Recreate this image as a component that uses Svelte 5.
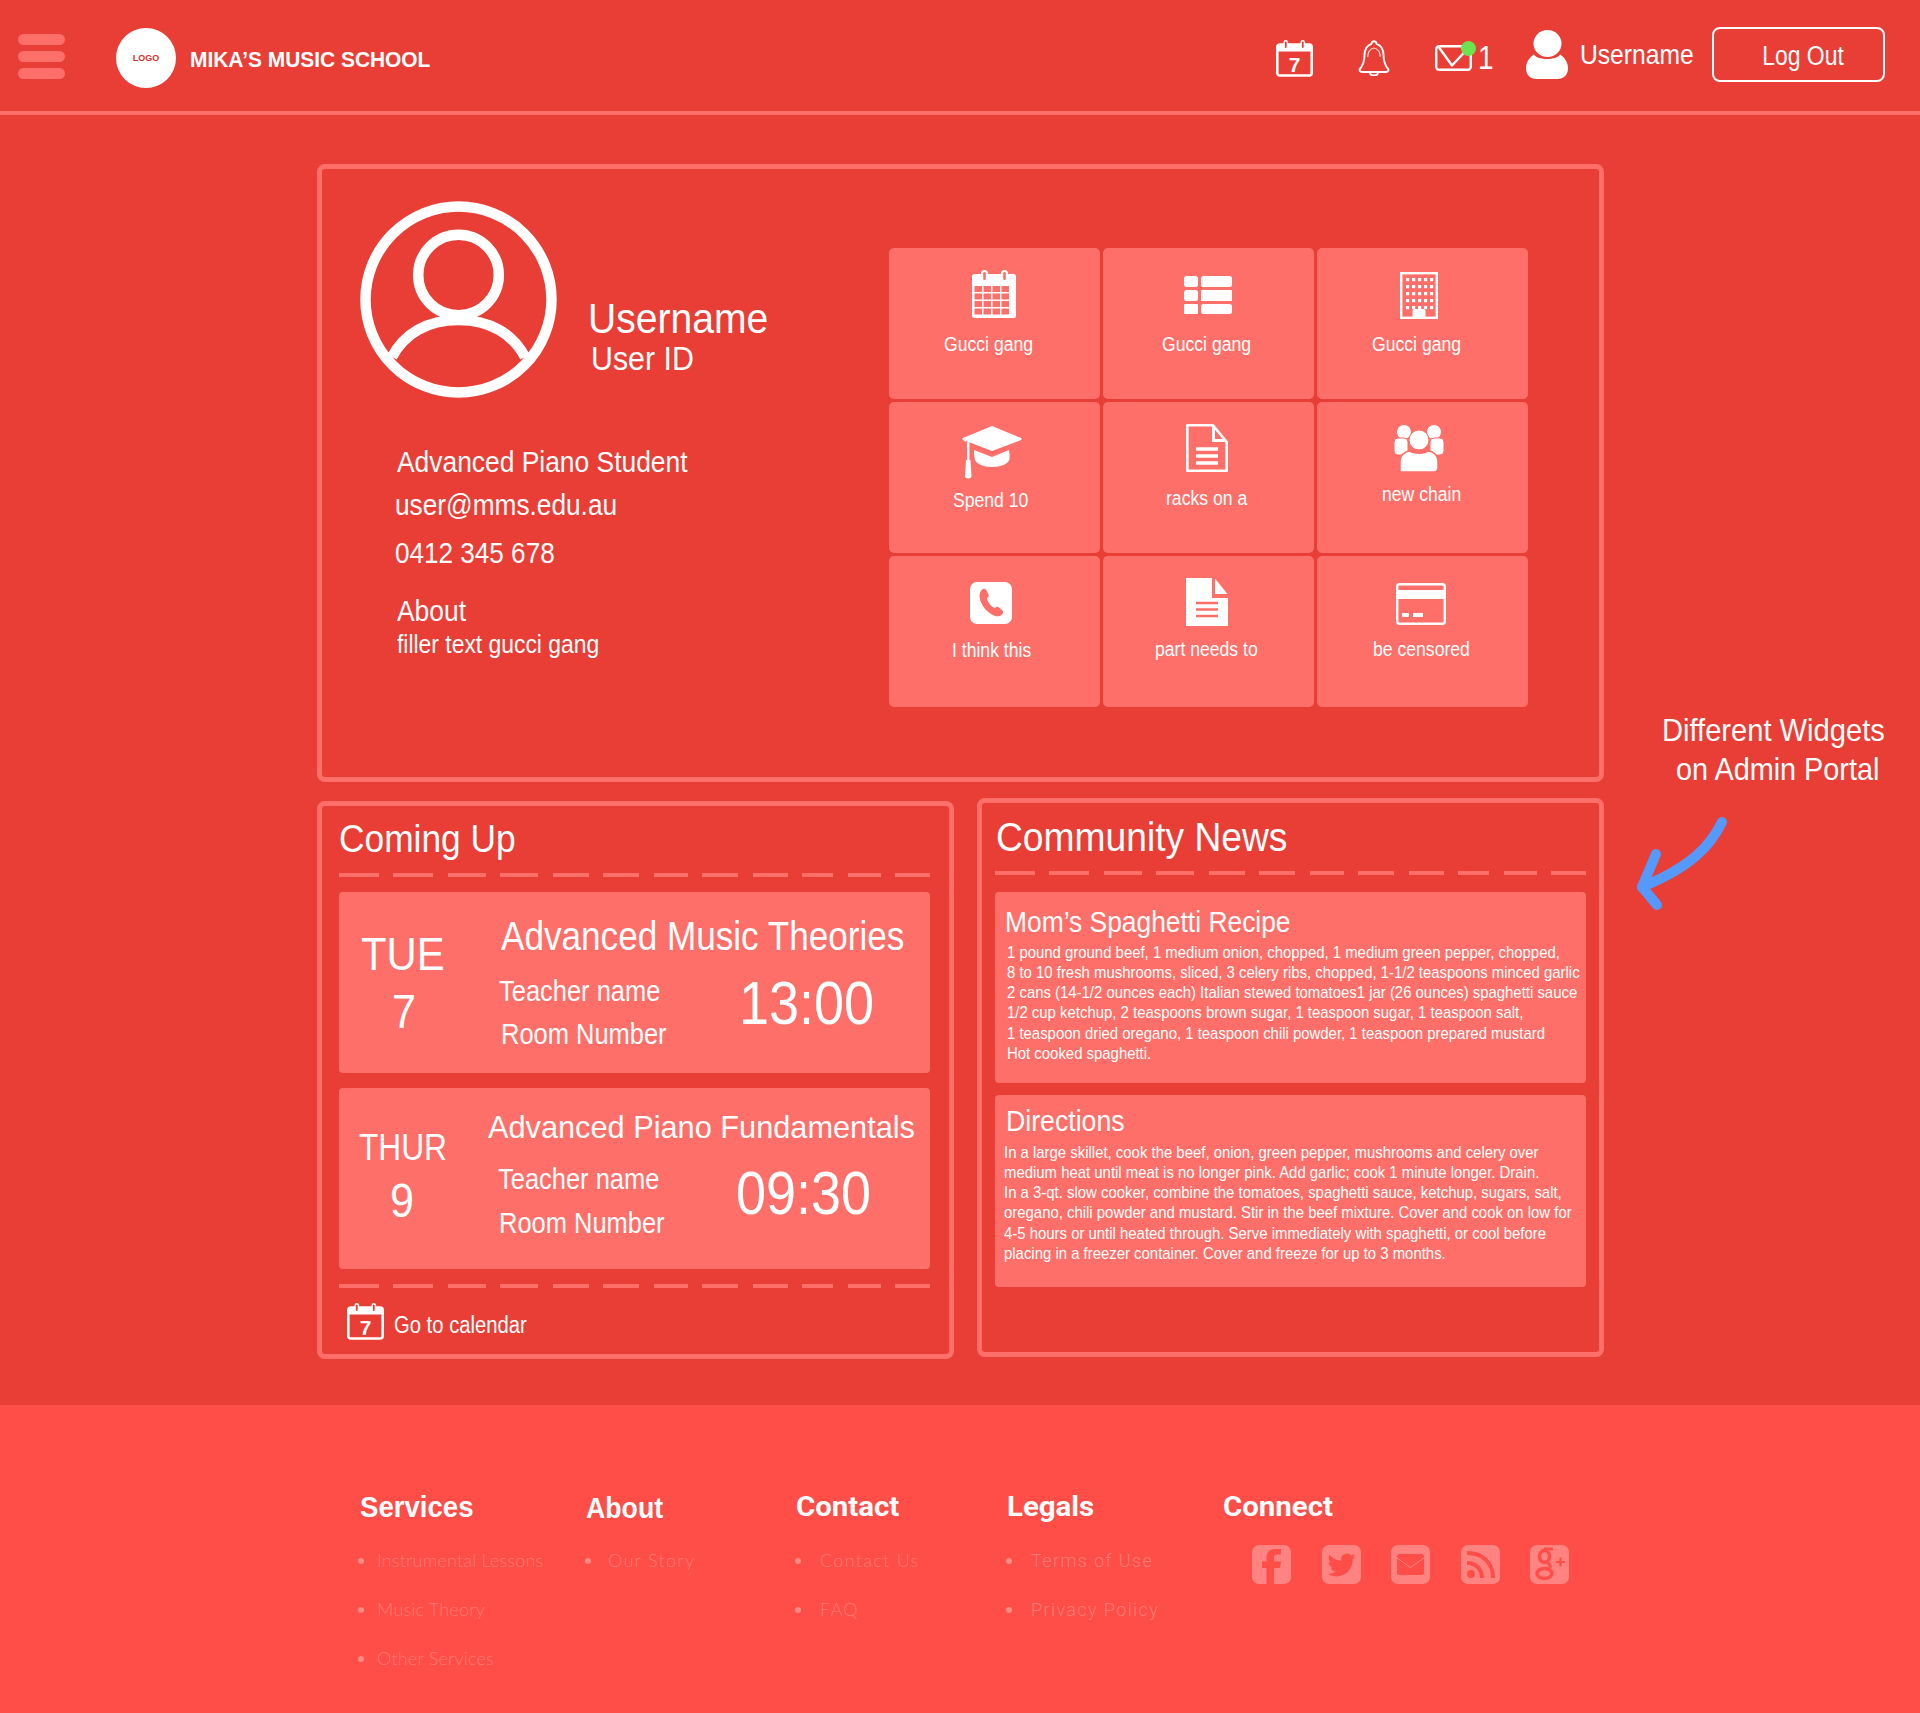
<script>
  const dashA = [40, 40, 38, 38, 36, 36, 34, 36, 35, 31, 33, 35];
  const recipe = [
    '1 pound ground beef, 1 medium onion, chopped, 1 medium green pepper, chopped,',
    '8 to 10 fresh mushrooms, sliced, 3 celery ribs, chopped, 1-1/2 teaspoons minced garlic',
    '2 cans (14-1/2 ounces each) Italian stewed tomatoes1 jar (26 ounces) spaghetti sauce',
    '1/2 cup ketchup, 2 teaspoons brown sugar, 1 teaspoon sugar, 1 teaspoon salt,',
    '1 teaspoon dried oregano, 1 teaspoon chili powder, 1 teaspoon prepared mustard',
    'Hot cooked spaghetti.'
  ];
  const directions = [
    'In a large skillet, cook the beef, onion, green pepper, mushrooms and celery over',
    'medium heat until meat is no longer pink. Add garlic; cook 1 minute longer. Drain.',
    'In a 3-qt. slow cooker, combine the tomatoes, spaghetti sauce, ketchup, sugars, salt,',
    'oregano, chili powder and mustard. Stir in the beef mixture. Cover and cook on low for',
    '4-5 hours or until heated through. Serve immediately with spaghetti, or cool before',
    'placing in a freezer container. Cover and freeze for up to 3 months.'
  ];
  const gridCells = [];
  for (let r = 0; r < 4; r++) for (let c = 0; c < 4; c++) gridCells.push([5 + c * 9, 16 + r * 7.5]);
  const windows = [];
  for (let r = 0; r < 5; r++) for (let c = 0; c < 5; c++) windows.push([6 + c * 6, 6 + r * 7]);
</script>

{#snippet dashes()}
  <div class="dashes">
    {#each dashA as w}<i style="width:{w}px"></i>{/each}
  </div>
{/snippet}

{#snippet cal7(cls, hole)}
  <svg class={cls} viewBox="0 0 37 37">
    <rect x="1.3" y="4.5" width="34.4" height="31" rx="2.5" fill="none" stroke="#fff" stroke-width="2.6"/>
    <rect x="1.3" y="4.5" width="34.4" height="7" fill="#fff"/>
    <rect x="7.5" y="0" width="4.6" height="9.5" rx="2.3" fill="#fff"/>
    <rect x="24.5" y="0" width="4.6" height="9.5" rx="2.3" fill="#fff"/>
    <rect x="8.9" y="1.5" width="1.8" height="6.5" rx=".9" fill={hole}/>
    <rect x="25.9" y="1.5" width="1.8" height="6.5" rx=".9" fill={hole}/>
    <text x="18.5" y="32" text-anchor="middle" class="seven">7</text>
  </svg>
{/snippet}

<div class="page">
  <header>
    <div class="burger"><i></i><i></i><i></i></div>
    <div class="logo"><span>LOGO</span></div>
    <div class="brand">MIKA’S MUSIC SCHOOL</div>
    <div class="spring"></div>
    {@render cal7('h-cal', '#E83E36')}
    <svg class="h-bell" viewBox="0 0 32 36" fill="none" stroke="#fff">
      <path stroke-width="1.9" stroke-linejoin="round" d="M16 1.2c-1.5 0-2.5 1-2.5 2.6C8.5 5.5 6.5 10 6.5 15c0 6-1 10-5 14.5 0 1.7 1 2.5 3 2.5h23c2 0 3-.8 3-2.5-4-4.500-5-8.500-5-14.500 0-5-2-9.500-7-11.200 0-1.600-1-2.600-2.500-2.600z"/>
      <path stroke-width="1.9" d="M12 32.300c0 2.400 2 3.200 4 3.200s4-.8 4-3.200"/>
      <path stroke-width="1.2" opacity=".8" d="M9.800 17c0-4.500 2.200-8 6.200-9 4 1 6.200 4.500 6.200 9"/>
    </svg>
    <div class="h-mail">
      <svg viewBox="0 0 37 26" fill="none" stroke="#fff" stroke-width="2.400">
        <rect x="1.200" y="1.200" width="34.600" height="23.600" rx="3"/>
        <path stroke-linejoin="round" d="M4 2.500l13 18 15-16"/>
      </svg>
      <i></i>
    </div>
    <div class="h-one">1</div>
    <svg class="h-user" viewBox="0 0 42 49" fill="#fff">
      <ellipse cx="21.500" cy="13.500" rx="14" ry="13.500"/>
      <path d="M8 24.500C4 27 0 32 0 38c0 7.500 5 11 10 11h22c5 0 10-3.500 10-11 0-6-4-11-8-13.500-3.500 6-22.500 6-26 0z"/>
    </svg>
    <div class="h-name">Username</div>
    <div class="logout"><span>Log Out</span></div>
  </header>

  <main>
    <section class="profile">
      <div class="p-left">
        <div class="who">
          <svg class="avatar" viewBox="0 0 197 197" fill="none" stroke="#fff">
            <circle cx="98.500" cy="98.500" r="93" stroke-width="10.500"/>
            <circle cx="98.500" cy="74" r="40.300" stroke-width="10.500"/>
            <path stroke-width="10.500" d="M32 156c12-23 35-37 66.500-37S153 133 165 156"/>
          </svg>
          <div class="names">
            <span class="t u-name">Username</span>
            <span class="t u-id">User ID</span>
          </div>
        </div>
        <div class="facts">
          <span class="t f-role">Advanced Piano Student</span>
          <span class="t f-mail">user@mms.edu.au</span>
          <span class="t f-phone">0412 345 678</span>
          <span class="t f-about">About</span>
          <span class="t f-fill">filler text gucci gang</span>
        </div>
      </div>

      <div class="tiles">
        <div class="tile t1">
          <svg class="ic" width="44" height="48" viewBox="0 0 44 48">
            <rect x="0" y="4" width="44" height="44" rx="2.500" fill="#fff"/>
            {#each gridCells as [x, y]}<rect x={x - 2.500} {y} width="7.500" height="6" fill="#FF6F69"/>{/each}
            <rect x="9" y="0" width="7" height="11" rx="3.500" fill="#fff"/>
            <rect x="29" y="0" width="7" height="11" rx="3.500" fill="#fff"/>
            <rect x="11.200" y="2" width="2.600" height="8" rx="1.300" fill="#FF6F69"/>
            <rect x="31.200" y="2" width="2.600" height="8" rx="1.300" fill="#FF6F69"/>
          </svg>
          <span class="t lb">Gucci gang</span>
        </div>
        <div class="tile t2">
          <svg class="ic" width="48" height="38" viewBox="0 0 48 38" fill="#fff">
            <rect x="0" y="0" width="14" height="11" rx="2.500"/><rect x="17" y="0" width="31" height="11" rx="2.500"/>
            <rect x="0" y="14" width="14" height="11" rx="2.500"/><rect x="17" y="14" width="31" height="11" rx="1"/>
            <rect x="0" y="28" width="14" height="10" rx="1"/><rect x="17" y="28" width="31" height="10" rx="2.500"/>
          </svg>
          <span class="t lb">Gucci gang</span>
        </div>
        <div class="tile t3">
          <svg class="ic" width="38" height="47" viewBox="0 0 38 47" fill="#fff">
            <rect x="1.200" y="1.200" width="35.600" height="44.600" fill="none" stroke="#fff" stroke-width="2.400"/>
            {#each windows as [x, y]}<rect {x} {y} width="3.200" height="3.200"/>{/each}
            <path d="M12.500 47V39c0-1 1-2 2-2h9c1 0 2 1 2 2v8z"/>
          </svg>
          <span class="t lb">Gucci gang</span>
        </div>
        <div class="tile t4">
          <svg class="ic" width="60" height="53" viewBox="0 0 60 53" fill="#fff">
            <path d="M30 0l29 12c1 .6 1 1.400 0 2L30 25 4 15v1L1 14c-1-.6-1-1.400 0-2z"/>
            <path d="M12 24l18 7 17-7c.6 3 .6 6 .6 9-1 5-9 8-17.600 8-9 0-15-3-17-7-1-3-1-7-1-10z"/>
            <rect x="5" y="15" width="2.400" height="20"/>
            <path d="M4 34h4.500l1 16c0 1.500-1 2.500-3.200 2.500S3 51.500 3 50z"/>
          </svg>
          <span class="t lb">Spend 10</span>
        </div>
        <div class="tile t5">
          <svg class="ic" width="42" height="48" viewBox="0 0 42 48" fill="none" stroke="#fff">
            <path stroke-width="2.600" stroke-linejoin="round" d="M1.300 1.300H27L40.700 18V46.700H1.300z"/>
            <path fill="#fff" stroke="none" d="M26 2h3v13h11l1 3H26z"/>
            <path stroke-width="3.500" d="M10 25h22M10 32h22M10 39h22"/>
          </svg>
          <span class="t lb">racks on a</span>
        </div>
        <div class="tile t6">
          <svg class="ic" width="50" height="48" viewBox="0 0 50 48" fill="#fff" stroke="#FF6F69" stroke-width="1">
            <circle cx="10" cy="8" r="7.500"/><circle cx="40" cy="8" r="7.500"/>
            <rect x="0" y="14" width="14" height="17" rx="4"/><rect x="36" y="14" width="14" height="17" rx="4"/>
            <circle cx="25" cy="16" r="10"/>
            <path stroke-width="1.500" d="M6 48V38c0-7 5-11 10-11 3 3 15 3 18 0 5 0 10 4 10 11v6c0 2-2 4-4 4z"/>
          </svg>
          <span class="t lb">new chain</span>
        </div>
        <div class="tile t7">
          <svg class="ic" width="42" height="42" viewBox="0 0 42 42">
            <rect width="42" height="42" rx="7" fill="#fff"/>
            <path fill="#FF6F69" d="M12 7.500c2-1.500 3.500-1 4.500 1l2 4c.5 1.500 0 2.500-1.500 3.500 0 3 4 9 8 10 1.500-1.500 3-1.500 4-.5l3.500 3c1 1 1 2.500-.5 4-2 2-5 2.500-8 1C16 30 10 22 9.500 14c0-2.500 1-5 2.500-6.500z"/>
          </svg>
          <span class="t lb">I think this</span>
        </div>
        <div class="tile t8">
          <svg class="ic" width="42" height="48" viewBox="0 0 42 48" fill="#fff">
            <path d="M0 0h26v20h16v28H0z"/>
            <path d="M29 .5L41.500 16H29z"/>
            <path stroke="#FF6F69" stroke-width="2.500" d="M10 25h22M10 31.500h22M10 38h22"/>
          </svg>
          <span class="t lb">part needs to</span>
        </div>
        <div class="tile t9">
          <svg class="ic" width="50" height="42" viewBox="0 0 50 42" fill="#fff">
            <rect x="1.200" y="1.200" width="47.600" height="39.600" rx="2.500" fill="none" stroke="#fff" stroke-width="2.400"/>
            <rect x="1" y="7" width="48" height="9"/>
            <rect x="6" y="30" width="7" height="4" rx="1"/><rect x="17" y="30" width="10" height="4"/>
          </svg>
          <span class="t lb">be censored</span>
        </div>
      </div>
    </section>

    <div class="lower">
      <section class="coming">
        <span class="t w-head">Coming Up</span>
        {@render dashes()}
        <div class="event e1">
          <div class="date">
            <span class="t d-day">TUE</span>
            <span class="t d-num">7</span>
          </div>
          <div class="info">
            <span class="t e-title">Advanced Music Theories</span>
            <div class="e-row">
              <div class="e-meta">
                <span class="t e-teach">Teacher name</span>
                <span class="t e-room">Room Number</span>
              </div>
              <span class="t e-time">13:00</span>
            </div>
          </div>
        </div>
        <div class="event e2">
          <div class="date">
            <span class="t d-day">THUR</span>
            <span class="t d-num">9</span>
          </div>
          <div class="info">
            <span class="t e-title">Advanced Piano Fundamentals</span>
            <div class="e-row">
              <div class="e-meta">
                <span class="t e-teach">Teacher name</span>
                <span class="t e-room">Room Number</span>
              </div>
              <span class="t e-time">09:30</span>
            </div>
          </div>
        </div>
        {@render dashes()}
        <div class="golink">
          {@render cal7('g-cal', '#E83E36')}
          <span class="t g-text">Go to calendar</span>
        </div>
      </section>

      <section class="news">
        <span class="t w-head n-head">Community News</span>
        {@render dashes()}
        <article class="post p1">
          <span class="t post-title">Mom’s Spaghetti Recipe</span>
          <div class="post-body">
            {#each recipe as line}<span class="t post-line">{line}</span>{/each}
          </div>
        </article>
        <article class="post p2">
          <span class="t post-title">Directions</span>
          <div class="post-body">
            {#each directions as line}<span class="t post-line">{line}</span>{/each}
          </div>
        </article>
      </section>
    </div>
  </main>

  <footer>
    <div class="col c1">
      <span class="t f-h">Services</span>
      <ul>
        <li><span class="t li-la">Instrumental Lessons</span></li>
        <li><span class="t li-la">Music Theory</span></li>
        <li><span class="t li-la">Other Services</span></li>
      </ul>
    </div>
    <div class="col c2">
      <span class="t f-h f-h2">About</span>
      <ul><li><span class="t li-la wide">Our Story</span></li></ul>
    </div>
    <div class="col c3">
      <span class="t f-h ro">Contact</span>
      <ul>
        <li><span class="t li-la wide">Contact Us</span></li>
        <li><span class="t li-la wide">FAQ</span></li>
      </ul>
    </div>
    <div class="col c4">
      <span class="t f-h ro">Legals</span>
      <ul>
        <li><span class="t li-ro">Terms of Use</span></li>
        <li><span class="t li-ro">Privacy Policy</span></li>
      </ul>
    </div>
    <div class="col c5">
      <span class="t f-h ro">Connect</span>
      <div class="social">
        <svg viewBox="0 0 39 39">
          <rect width="39" height="39" rx="7" fill="#FF8481"/>
          <path fill="#FF4D47" d="M22 39V23h6l1-6.500h-7V13c0-2.200 1-3.500 3.500-3.500H29V4h-5c-6.500 0-9.500 3.500-9.500 9v3.500H10V23h4.500v16z"/>
        </svg>
        <svg viewBox="0 0 39 39">
          <rect width="39" height="39" rx="7" fill="#FF8481"/>
          <path fill="#FF4D47" transform="translate(5.500 6) scale(1.170)" d="M23.950 4.570a10 10 0 0 1-2.820.78 4.960 4.960 0 0 0 2.160-2.720c-.95.55-2 .96-3.130 1.190a4.920 4.920 0 0 0-8.380 4.480C7.690 8.100 4.070 6.130 1.640 3.160a4.820 4.820 0 0 0-.67 2.480c0 1.710.87 3.210 2.190 4.100a4.900 4.900 0 0 1-2.230-.62v.06a4.920 4.920 0 0 0 3.950 4.830 5 5 0 0 1-2.210.08 4.940 4.940 0 0 0 4.600 3.420 9.870 9.870 0 0 1-6.100 2.100c-.39 0-.78-.02-1.170-.07a13.900 13.900 0 0 0 7.550 2.210c9.050 0 14-7.500 14-13.980 0-.21 0-.42-.02-.63.96-.69 1.800-1.560 2.460-2.550z"/>
        </svg>
        <svg viewBox="0 0 39 39">
          <rect width="39" height="39" rx="7" fill="#FF8481"/>
          <rect x="6" y="9" width="27" height="21" rx="2.500" fill="#FF4D47"/>
          <path fill="none" stroke="#FF8481" stroke-width="1" d="M6 13l13.500 9.500L33 13"/>
        </svg>
        <svg viewBox="0 0 39 39">
          <rect width="39" height="39" rx="7" fill="#FF8481"/>
          <circle cx="10" cy="29" r="4" fill="#FF4D47"/>
          <path fill="none" stroke="#FF4D47" stroke-width="4" d="M6 18c9 0 15 6 15 15"/>
          <path fill="none" stroke="#FF4D47" stroke-width="4" d="M6 8c16 0 26 10 26 25"/>
        </svg>
        <svg viewBox="0 0 39 39">
          <rect width="39" height="39" rx="7" fill="#FF8481"/>
          <g fill="none" stroke="#FF4D47">
            <ellipse cx="14.500" cy="11.500" rx="5" ry="6" stroke-width="3.500"/>
            <ellipse cx="14.500" cy="28.500" rx="7.500" ry="5" stroke-width="3.500"/>
            <path stroke-width="3" d="M14 4h9M17 17c2 2 4 3 3 6"/>
            <path stroke-width="2.200" d="M26 17h9M30.500 12.500v9"/>
          </g>
        </svg>
      </div>
    </div>
  </footer>

  <div class="note">
    <span class="t n1">Different Widgets</span>
    <span class="t n2">on Admin Portal</span>
  </div>
  <svg class="arrow" viewBox="0 0 100 100" fill="none" stroke="#5599FF" stroke-width="10" stroke-linecap="round" stroke-linejoin="round">
    <path d="M92 10C80 35 60 55 12 75"/>
    <path d="M26 42L12 75 27 93"/>
  </svg>
</div>

<style>
  :global(body) {
    margin: 0;
    background: #E83E36;
  }
  * { box-sizing: border-box; }
  .page {
    position: relative;
    width: 1920px;
    height: 1713px;
    overflow: hidden;
    background: #E83E36;
    color: #fff;
    font-family: "Liberation Sans", Arial, sans-serif;
    line-height: 1.2;
  }
  .t {
    display: block;
    width: max-content;
    white-space: nowrap;
    transform-origin: 0 0;
  }

  /* header */
  header {
    display: flex;
    align-items: flex-start;
    height: 115px;
    border-bottom: 4px solid #FF6F69;
  }
  .burger {
    display: flex;
    flex-direction: column;
    gap: 6px;
    width: 47px;
    margin: 34px 0 0 18px;
  }
  .burger i {
    display: block;
    height: 11px;
    border-radius: 6px;
    background: #FF6F69;
  }
  .logo {
    display: flex;
    align-items: center;
    justify-content: center;
    width: 60px;
    height: 60px;
    margin: 28px 0 0 51px;
    border-radius: 50%;
    background: #fff;
    color: #D5302A;
    font-size: 9px;
    font-weight: 700;
  }
  .brand {
    margin: 47px 0 0 14px;
    font-size: 22px;
    font-weight: 700;
    white-space: nowrap;
    transform: scaleX(.95);
    transform-origin: 0 0;
  }
  .spring { flex: 1; }
  .h-cal { width: 37px; height: 37px; margin: 40px 0 0 0; }
  .seven {
    font-family: "Liberation Sans", sans-serif;
    font-size: 21px;
    font-weight: 700;
    fill: #fff;
  }
  .h-bell { width: 32px; height: 36px; margin: 40px 0 0 45px; }
  .h-mail { position: relative; width: 37px; height: 26px; margin: 45px 0 0 45px; }
  .h-mail svg { display: block; }
  .h-mail i {
    position: absolute;
    left: 26px;
    top: -4.500px;
    width: 15px;
    height: 15px;
    border-radius: 50%;
    background: #6BE24F;
  }
  .h-one {
    margin: 38px 0 0 6px;
    width: 14px;
    font-size: 33px;
    transform: scaleX(.85);
    transform-origin: 0 0;
  }
  .h-user { width: 42px; height: 49px; margin: 30px 0 0 34px; }
  .h-name {
    margin: 37.500px 13.500px 0 12px;
    width: 119px;
    font-size: 28px;
    transform: scaleX(.88);
    transform-origin: 0 0;
  }
  .logout {
    display: flex;
    align-items: center;
    justify-content: center;
    width: 173px;
    height: 55px;
    margin: 27px 35px 0 0;
    padding: 3px 0 0 10px;
    border: 2.500px solid #fff;
    border-radius: 8px;
    font-size: 27px;
  }
  .logout span { display: block; transform: scaleX(.85); }

  /* main */
  main {
    width: 1287px;
    margin: 49px 0 0 317px;
    height: 1241px;
  }
  .profile {
    display: flex;
    height: 618px;
    border: 5px solid #FF6F69;
    border-radius: 8px;
  }
  .p-left { width: 567px; flex: none; }
  .who { display: flex; margin: 32px 0 0 38px; height: 197px; }
  .avatar { width: 197px; height: 197px; flex: none; }
  .names { margin: 93px 0 0 31px; }
  .u-name { font-size: 42px; transform: scaleX(.93); }
  .u-id { font-size: 33px; margin: -5px 0 0 3px; transform: scaleX(.92); }
  .facts { margin: 46.500px 0 0 75px; }
  .f-role { font-size: 29px; transform: scaleX(.91); }
  .f-mail { font-size: 29px; margin: 9px 0 0 -2px; transform: scaleX(.905); }
  .f-phone { font-size: 29px; margin: 13px 0 0 -2px; transform: scaleX(.9); }
  .f-about { font-size: 29px; margin-top: 23px; transform: scaleX(.91); }
  .f-fill { font-size: 26px; margin-top: 0; transform: scaleX(.88); }

  .tiles {
    display: grid;
    grid-template-columns: 211px 211px 211px;
    grid-auto-rows: 151px;
    gap: 3px;
    margin-top: 79px;
    align-self: flex-start;
  }
  .tile {
    background: #FF6F69;
    border-radius: 5px;
  }
  .tile .ic { display: block; }
  .lb {
    font-size: 20px;
    line-height: 24px;
    transform: scaleX(.88);
  }
  .t1 .ic { margin: 22px 0 0 83px; }
  .t1 .lb { margin: 13.700px 0 0 55px; }
  .t2 .ic { margin: 28px 0 0 81px; }
  .t2 .lb { margin: 17.700px 0 0 59px; }
  .t3 .ic { margin: 24px 0 0 83px; }
  .t3 .lb { margin: 12.700px 0 0 54.500px; }
  .t4 .ic { margin: 24px 0 0 73px; }
  .t4 .lb { margin: 8.700px 0 0 63.500px; }
  .t5 .ic { margin: 22px 0 0 83px; }
  .t5 .lb { margin: 14px 0 0 62.500px; }
  .t6 .ic { margin: 22px 0 0 77px; }
  .t6 .lb { margin: 10px 0 0 64.500px; }
  .t7 .ic { margin: 26px 0 0 81px; }
  .t7 .lb { margin: 13.500px 0 0 62.500px; }
  .t8 .ic { margin: 22px 0 0 83px; }
  .t8 .lb { margin: 11px 0 0 51.500px; }
  .t9 .ic { margin: 27px 0 0 79px; }
  .t9 .lb { margin: 12px 0 0 55.500px; }

  /* widgets */
  .lower {
    display: grid;
    grid-template-columns: 637px 627px;
    gap: 23px;
    align-items: start;
  }
  .coming, .news {
    border: 5px solid #FF6F69;
    border-radius: 8px;
  }
  .coming {
    height: 558px;
    margin-top: 19px;
    padding: 0 19px 0 17px;
  }
  .news {
    height: 559px;
    margin-top: 16px;
    padding: 0 13px;
  }
  .w-head {
    font-size: 38px;
    margin: 11px 0 -1px;
    transform: scaleX(.93);
  }
  .n-head {
    font-size: 40px;
    margin: 10px 0 -1px 1px;
  }
  .dashes {
    display: flex;
    justify-content: space-between;
    height: 4px;
    margin-top: 11.400px;
  }
  .dashes i { display: block; height: 4px; background: #FF6F69; }
  .event {
    display: flex;
    height: 181px;
    margin-top: 15px;
    border-radius: 4px;
    background: #FF6F69;
  }
  .event + .dashes { margin-top: 15px; }
  .date { flex: none; }
  .e1 .date { width: 162px; }
  .e2 .date { width: 148.500px; }
  .e1 .d-day { font-size: 47px; margin: 34.500px 0 -1px 22px; transform: scaleX(.89); }
  .e2 .d-day { font-size: 36px; margin: 38px 0 0 20px; transform: scaleX(.88); }
  .d-num { font-size: 49px; transform: scaleX(.88); }
  .e1 .d-num { margin: 0 0 0 52.500px; }
  .e2 .d-num { margin: 1.400px 0 0 51px; }
  .e1 .e-title { font-size: 40px; margin-top: 20px; transform: scaleX(.878); }
  .e2 .e-title { font-size: 32px; margin-top: 20.200px; transform: scaleX(.96); }
  .e-row { display: flex; align-items: flex-start; }
  .e1 .e-row { margin-left: -2px; }
  .e2 .e-row { margin-left: 10px; }
  .e-meta { width: 237px; flex: none; }
  .e-teach { font-size: 29px; transform: scaleX(.878); }
  .e-room { font-size: 29px; margin: 10px 0 0 1.500px; transform: scaleX(.878); }
  .e1 .e-teach { margin-top: 14px; }
  .e1 .e-room { margin-top: 8.500px; }
  .e2 .e-teach { margin-top: 15px; }
  .e-time { font-size: 62px; transform: scaleX(.87); }
  .e1 .e-time { margin: 6.300px 0 0 3px; }
  .e2 .e-time { margin: 9.700px 0 0 1.500px; }
  .golink {
    display: flex;
    margin-top: 15.500px;
    padding-left: 8px;
  }
  .g-cal { width: 37px; height: 37px; flex: none; }
  .g-text {
    margin: 8.700px 0 0 9.500px;
    font-size: 23px;
    transform: scaleX(.88);
  }
  .news .dashes { margin-top: 11px; }
  .post {
    border-radius: 4px;
    background: #FF6F69;
    overflow: hidden;
  }
  .p1 { height: 191px; margin-top: 17px; }
  .p2 { height: 192px; margin-top: 12px; }
  .post-title { font-size: 29px; transform: scaleX(.91); }
  .p1 .post-title { margin: 13px 0 0 10px; }
  .p2 .post-title { margin: 8.500px 0 0 11px; transform: scaleX(.92); }
  .post-line {
    font-size: 17px;
    line-height: 20.200px;
    transform: scaleX(.877);
  }
  .post-body { margin-top: 3px; }
  .p1 .post-body { padding-left: 12px; }
  .p2 .post-body { padding-left: 9px; margin-top: 4.500px; }

  /* footer */
  footer {
    display: flex;
    height: 308px;
    padding: 81px 0 0 359px;
    background: #FF4D47;
  }
  .col { flex: none; }
  .c1 { width: 227px; }
  .c2 { width: 210px; }
  .c3 { width: 211px; }
  .c4 { width: 216px; }
  .f-h {
    height: 50px;
    padding-top: 2.500px;
    font-size: 30px;
    font-weight: 700;
    line-height: 36px;
    transform: scaleX(.92);
  }
  .c1 .f-h { margin-left: 1px; }
  .f-h2 { padding-top: 3.500px; transform: scaleX(.89); }
  .ro {
    padding-top: 2.500px;
    font-family: Roboto, sans-serif;
    font-size: 28px;
    transform: scaleX(1.05);
  }
  ul { margin: 0; padding: 0; list-style: none; }
  li {
    position: relative;
    display: flex;
    align-items: center;
    height: 49px;
    padding-left: 22px;
    color: #FF7C78;
  }
  li::before {
    content: "";
    position: absolute;
    left: -1px;
    top: 21.500px;
    width: 6px;
    height: 6px;
    border-radius: 50%;
    background: #FF8A86;
  }
  .c1 li { padding-left: 18px; }
  .c3 li, .c4 li { padding-left: 24px; }
  .li-la {
    font-family: Lato, sans-serif;
    font-size: 18px;
    font-weight: 300;
    letter-spacing: .2px;
  }
  .li-la.wide { letter-spacing: 1.300px; }
  .li-ro {
    font-family: Roboto, sans-serif;
    font-size: 18px;
    font-weight: 300;
    letter-spacing: 1.400px;
  }
  .social {
    display: flex;
    gap: 30.600px;
    margin: 9px 0 0 29px;
  }
  .social svg { display: block; width: 39px; height: 39px; flex: none; }

  /* annotation over the page */
  .note {
    position: absolute;
    left: 1661.500px;
    top: 710.500px;
    font-size: 32px;
  }
  .n1 { transform: scaleX(.91); }
  .n2 { margin: 1.600px 0 0 14px; transform: scaleX(.9); }
  .arrow {
    position: absolute;
    left: 1630px;
    top: 812px;
    width: 100px;
    height: 100px;
  }
</style>
